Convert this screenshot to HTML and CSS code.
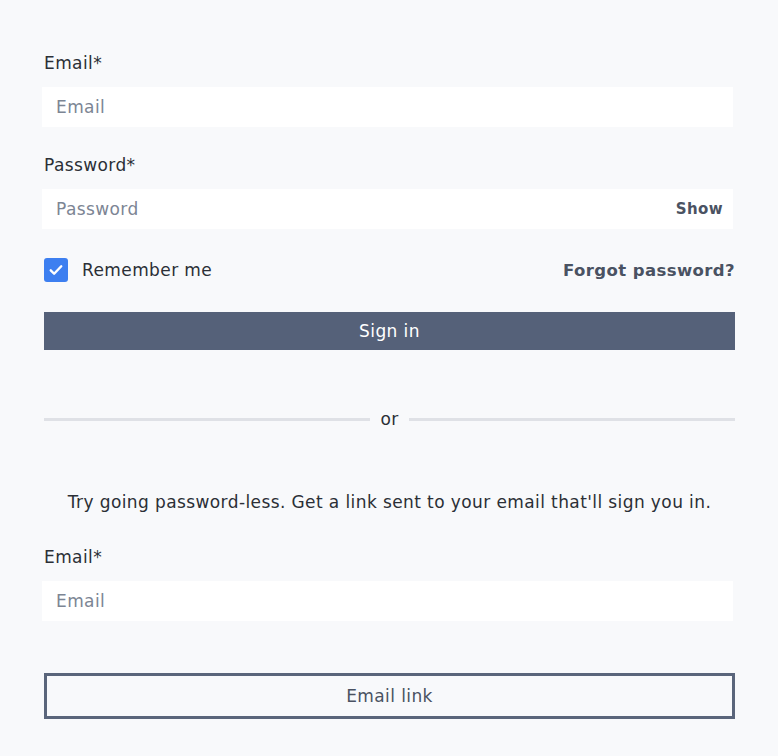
FILE: index.html
```html
<!DOCTYPE html>
<html lang="en">
<head>
  <meta charset="UTF-8" />
  <meta name="viewport" content="width=device-width, initial-scale=1.0"/>
  <title>Sign in</title>
  <link rel="stylesheet" href="styles.css">
</head>
<body>
  <main class="signin">
    <form class="form" onsubmit="return false">
      <label class="field">
        <span class="label">Email*</span>
        <input class="input" type="email" placeholder="Email">
      </label>

      <label class="field">
        <span class="label">Password*</span>
        <span class="input-wrap">
          <input class="input" type="password" placeholder="Password">
          <button type="button" class="show">Show</button>
        </span>
      </label>

      <div class="row">
        <label class="remember">
          <span class="check">
            <svg viewBox="0 0 24 24" width="18" height="18"><path d="M5 12.5l4.5 4.5L19 7" fill="none" stroke="#fff" stroke-width="3.2" stroke-linecap="round" stroke-linejoin="round"/></svg>
          </span>
          Remember me
        </label>
        <a class="forgot" href="#">Forgot password?</a>
      </div>

      <button class="btn primary">Sign in</button>
    </form>

    <div class="divider"><span>or</span></div>

    <p class="hint">Try going password-less. Get a link sent to your email that'll sign you in.</p>

    <form class="form" onsubmit="return false">
      <label class="field">
        <span class="label">Email*</span>
        <input class="input" type="email" placeholder="Email">
      </label>
      <button class="btn outline">Email link</button>
    </form>
  </main>
</body>
</html>
```

FILE: styles.css
```css
body {
  font-family: 'DejaVu Sans', sans-serif;
  background-color: #f8f9fb;
  color: #2b2f36;
  margin: 0;
  padding: 52px 43px 0 44px;
  font-size: 17px;
  letter-spacing: 0.4px;
}

.signin {
  max-width: 691px;
}

.form {
  display: flex;
  flex-direction: column;
}

.field {
  display: flex;
  flex-direction: column;
  margin-bottom: 27px;
}

.label {
  line-height: 22px;
  margin-bottom: 13px;
}

.input {
  box-sizing: border-box;
  height: 40px;
  width: 100%;
  margin-left: -2px;
  border: none;
  background: #fff;
  padding: 0 14px;
  font-family: inherit;
  font-size: 17px;
  letter-spacing: 0.4px;
  color: #2b2f36;
  outline: none;
}

.input::placeholder {
  color: #7c8594;
}

.input-wrap {
  position: relative;
  display: block;
}

.show {
  position: absolute;
  right: 12px;
  top: 11px;
  border: none;
  background: none;
  padding: 0;
  font-family: inherit;
  font-weight: 700;
  font-size: 15px;
  letter-spacing: 0.4px;
  color: #4a5262;
}

.row {
  display: flex;
  justify-content: space-between;
  align-items: center;
  margin-top: 2px;
  height: 24px;
}

.remember {
  display: flex;
  align-items: center;
  gap: 14px;
}

.check {
  width: 24px;
  height: 24px;
  border-radius: 3px;
  background: #3d7ff0;
  display: flex;
  align-items: center;
  justify-content: center;
}

.forgot {
  font-weight: 700;
  font-size: 16.5px;
  color: #4a5262;
  text-decoration: none;
}

.btn {
  height: 38px;
  font-family: inherit;
  font-size: 17px;
  letter-spacing: 0.4px;
  cursor: pointer;
}

.primary {
  margin-top: 30px;
  border: none;
  background: #556179;
  color: #fff;
}

.divider {
  display: flex;
  align-items: center;
  gap: 10px;
  margin-top: 58px;
  line-height: 22px;
}

.divider::before, .divider::after {
  content: "";
  flex: 1;
  height: 3px;
  background: #dfe1e6;
}

.hint {
  text-align: center;
  line-height: 24px;
  margin: 60px 0 32px;
}

.outline {
  height: 46px;
  margin-top: 25px;
  border: 3px solid #5a657b;
  background: #f8f9fb;
  color: #4a5262;
}
```
